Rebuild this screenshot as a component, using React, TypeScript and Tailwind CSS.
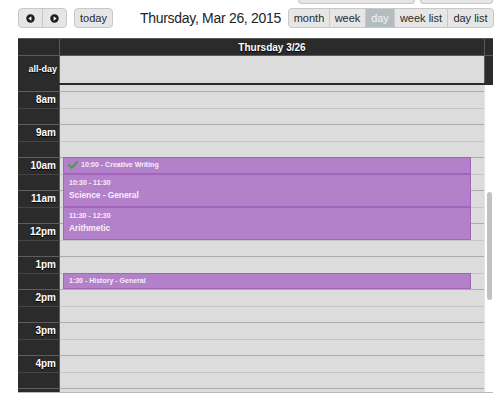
import React from 'react'

const hours = ['7am', '8am', '9am', '10am', '11am', '12pm', '1pm', '2pm', '3pm', '4pm', '5pm']

const views = [
  { label: 'month', w: 'w-[42px]' },
  { label: 'week', w: 'w-[37px]' },
  { label: 'day', w: 'w-[30px]', active: true },
  { label: 'week list', w: 'w-[54px]' },
  { label: 'day list', w: 'w-[47px]' },
]

const labelText = 'font-bold text-white [text-shadow:0_1px_1px_#000] whitespace-nowrap'

function CircleArrow({ dir }: { dir: 'left' | 'right' }) {
  return (
    <svg width="9" height="9" viewBox="0 0 9 9">
      <circle cx="4.5" cy="4.5" r="4.2" fill="#1e1e1e" />
      {dir === 'left' ? (
        <path d="M2.4 4.5 L5.4 2.3 L5.4 6.7 Z" fill="#fff" />
      ) : (
        <path d="M6.6 4.5 L3.6 2.3 L3.6 6.7 Z" fill="#fff" />
      )}
    </svg>
  )
}

function Check() {
  return (
    <svg width="10" height="8" viewBox="0 0 10 8">
      <path d="M1 4.2 L3.8 6.8 L9 1" fill="none" stroke="#3aa54a" strokeWidth="2.2" strokeLinecap="round" strokeLinejoin="round" />
    </svg>
  )
}

export default function App() {
  // half-hour slots from 7am; the last one (5pm) is only partly in view
  const rows = Array.from({ length: 21 }, (_, i) => i)

  return (
    <div className="h-[414px] w-[500px] overflow-hidden bg-white font-['Liberation_Sans',Arial,sans-serif]">
      {/* bottom edge of the toolbar row scrolled above */}
      <div className="flex h-[4px] gap-[5px] pl-[298px]">
        <div className="h-full w-[117px] rounded-b-[4px] border border-t-0 border-[#c4c4c4] bg-[#e6e6e6]" />
        <div className="h-full w-[73px] rounded-b-[4px] border border-t-0 border-[#c4c4c4] bg-[#e6e6e6]" />
      </div>

      {/* toolbar */}
      <div className="mt-[4px] flex h-[20px] items-center pl-[18px] pr-[6px]">
        <div className="flex h-full">
          <button className="flex h-full w-[25px] items-center justify-center rounded-l-[4px] border border-[#c8c8c8] bg-[#e6e6e6]">
            <CircleArrow dir="left" />
          </button>
          <button className="-ml-px flex h-full w-[25px] items-center justify-center rounded-r-[4px] border border-[#c8c8c8] bg-[#e6e6e6]">
            <CircleArrow dir="right" />
          </button>
        </div>
        <button className="ml-[7px] h-full w-[39px] rounded-[4px] border border-[#c8c8c8] bg-[#e6e6e6] text-[11px] text-[#2a2a2a]">
          today
        </button>
        <h2 className="ml-[27px] text-[14px] tracking-[-0.3px] text-[#222]">Thursday, Mar 26, 2015</h2>
        <div className="ml-auto flex h-full">
          {views.map((v, i) => (
            <button
              key={v.label}
              className={`${v.w} h-full border border-[#c8c8c8] text-[11px] ${i > 0 ? '-ml-px' : 'rounded-l-[4px]'} ${
                i === views.length - 1 ? 'rounded-r-[4px]' : ''
              } ${v.active ? 'bg-[#b3bdc0] text-[#f4f4f4]' : 'bg-[#e6e6e6] text-[#2a2a2a]'}`}
            >
              {v.label}
            </button>
          ))}
        </div>
      </div>

      {/* calendar */}
      <div className="ml-[18px] mt-[10px] w-[475px]">
        {/* day header */}
        <div className="flex h-[17px] border-t border-[#5a5a5a] bg-[#2b2b2b]">
          <div className="w-[42px] border-r border-[#5a5a5a]" />
          <div className={`flex flex-1 items-center justify-center text-[10px] ${labelText}`}>Thursday 3/26</div>
          <div className="w-[9px] border-l border-[#5a5a5a]" />
        </div>

        {/* all-day row */}
        <div className="flex h-[28px] border-t border-[#5a5a5a] bg-[#2b2b2b]">
          <div className={`flex w-[42px] items-center justify-end border-r border-[#5a5a5a] pr-[2px] text-[9px] ${labelText}`}>
            all-day
          </div>
          <div className="flex-1 bg-[#dcdcdc]" />
          <div className="w-[9px] border-l border-[#5a5a5a]" />
        </div>
        <div className="h-[2px] bg-[#2b2b2b]" />

        {/* time grid */}
        <div className="flex h-[308px] border-b border-[#b8b8b8]">
          <div className="relative flex-1 overflow-hidden">
            <div className="relative -mt-[27px]">
              {rows.map((i) => {
                const isHour = i % 2 === 0
                const showLabel = isHour && i < 20
                return (
                  <div key={i} className="flex h-[16.5px]">
                    <div
                      className={`flex w-[42px] items-center justify-end border-r border-t border-r-[#5a5a5a] bg-[#2b2b2b] pr-[3px] text-[10px] ${
                        isHour ? 'border-t-[#5e5e5e]' : 'border-t-[#454545]'
                      } ${labelText}`}
                    >
                      {showLabel ? hours[i / 2] : ''}
                    </div>
                    <div
                      className={`flex-1 border-t bg-[#dcdcdc] ${isHour ? 'border-t-[#a9afaf]' : 'border-t-[#c6c6c6]'}`}
                    />
                  </div>
                )
              })}

              {/* events */}
              <div className="absolute left-[45px] right-[13px] top-[99px] flex h-[16.5px] items-center gap-[3px] border border-[#a264bd] bg-[#b381c9] pl-[4px] text-[7px] font-bold text-[#f6eefa]">
                <Check />
                <span>10:00 - Creative Writing</span>
              </div>
              <div className="absolute left-[45px] right-[13px] top-[115.5px] h-[33px] border border-[#a264bd] bg-[#b381c9] pl-[5px] pt-[3px] text-[#f6eefa]">
                <div className="text-[7px] font-bold leading-[10px]">10:30 - 11:30</div>
                <div className="mt-[2px] text-[8.5px] font-bold leading-[11px] tracking-[-0.1px]">Science - General</div>
              </div>
              <div className="absolute left-[45px] right-[13px] top-[148.5px] h-[33px] border border-[#a264bd] bg-[#b381c9] pl-[5px] pt-[3px] text-[#f6eefa]">
                <div className="text-[7px] font-bold leading-[10px]">11:30 - 12:30</div>
                <div className="mt-[2px] text-[8.5px] font-bold leading-[11px] tracking-[-0.1px]">Arithmetic</div>
              </div>
              <div className="absolute left-[45px] right-[13px] top-[214.5px] flex h-[16.5px] items-center border border-[#a264bd] bg-[#b381c9] pl-[5px] text-[7px] font-bold text-[#f6eefa]">
                1:30 - History - General
              </div>
            </div>
          </div>

          {/* scrollbar */}
          <div className="relative w-[9px] border-l border-[#e4e4e4] bg-white">
            <div className="absolute left-[2px] top-[107px] h-[108px] w-[5px] rounded-full bg-[#c2c2c2]" />
          </div>
        </div>
      </div>
    </div>
  )
}
